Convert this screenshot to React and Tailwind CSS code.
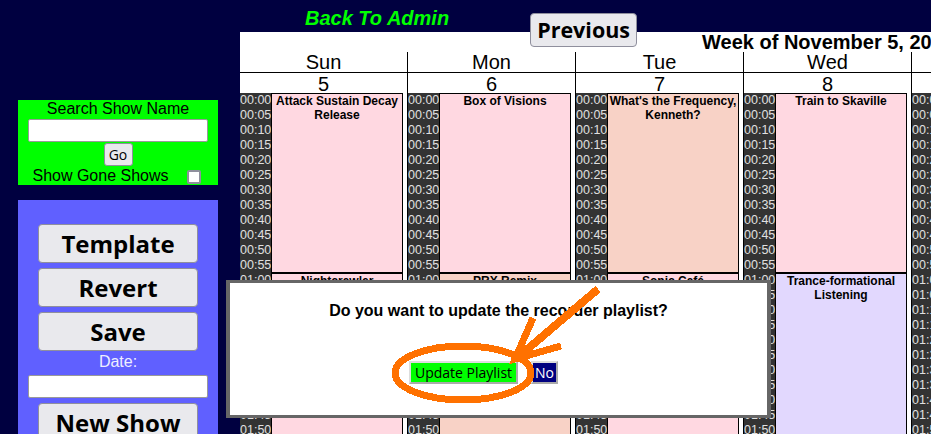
import React from 'react';

const PINK = 'bg-[#ffd8e1]';
const PEACH = 'bg-[#f8d2c6]';
const LAVENDER = 'bg-[#e2d8fe]';

const days = [
  { name: 'Sun', num: 5, shows: [{ title: 'Attack Sustain Decay Release', bg: PINK }, { title: 'Nightcrawler', bg: PINK }] },
  { name: 'Mon', num: 6, shows: [{ title: 'Box of Visions', bg: PINK }, { title: 'PRX Remix', bg: PEACH }] },
  { name: 'Tue', num: 7, shows: [{ title: "What's the Frequency, Kenneth?", bg: PEACH }, { title: 'Sonic Café', bg: PINK }] },
  { name: 'Wed', num: 8, shows: [{ title: 'Train to Skaville', bg: PINK }, { title: 'Trance-formational Listening', bg: LAVENDER }] },
  { name: 'Thu', num: 9, shows: [{ title: 'Night Shift', bg: PINK }, { title: 'Deep Cuts', bg: PEACH }] },
  { name: 'Fri', num: 10, shows: [{ title: 'Overnight Mix', bg: PINK }, { title: 'Late Set', bg: PINK }] },
  { name: 'Sat', num: 11, shows: [{ title: 'Graveyard Shift', bg: PEACH }, { title: 'Dawn Patrol', bg: PINK }] },
];

const times = Array.from({ length: 24 }, (_, i) => {
  const h = Math.floor((i * 5) / 60);
  const m = (i * 5) % 60;
  return `${String(h).padStart(2, '0')}:${String(m).padStart(2, '0')}`;
});

const DayColumn = ({ day }) => (
  <div className="w-[168px] shrink-0 border-r border-black flex flex-col">
    <div className="h-[21px] border-b border-black text-center text-[20px] leading-[20px]">{day.name}</div>
    <div className="h-[20px] text-center text-[20px] leading-[22px]">{day.num}</div>
    <div className="flex">
      <div className="w-[31px] bg-[#333333] text-[#e0e0e0] text-[12.5px] overflow-hidden">
        {times.map((t) => (
          <div key={t} className="h-[15px] leading-[15px]">{t}</div>
        ))}
      </div>
      <div className="w-[132px]">
        {day.shows.map((s) => (
          <div
            key={s.title}
            className={`h-[180px] border border-black ${s.bg} text-center font-bold text-[12px] leading-[14px] text-black`}
          >
            {s.title}
          </div>
        ))}
      </div>
    </div>
  </div>
);

const SideButton = ({ children }) => (
  <button className="w-[160px] h-[39px] shrink-0 bg-[#e9e9ed] border border-[#8f8f9d] rounded-[4px] font-['Open_Sans',sans-serif] font-bold text-[24px] leading-[24px] text-black">
    {children}
  </button>
);

const App = () => {
  return (
    <div className="w-[931px] h-[434px] overflow-hidden bg-[#000040] relative flex font-['Liberation_Sans',Arial,sans-serif] text-black">
      <aside className="w-[240px] shrink-0 pt-[100px] pl-[18px] flex flex-col">
        <div className="w-[200px] h-[85px] bg-[#00ff00] flex flex-col items-center">
          <div className="text-[16px] leading-[18px]">Search Show Name</div>
          <input className="mt-[1px] w-[180px] h-[23px] bg-white border border-[#999999] rounded-[2px]" />
          <button className="mt-[1px] h-[23px] w-[29px] bg-[#e9e9ed] border border-[#8f8f9d] rounded-[3px] font-['Open_Sans',sans-serif] text-[14px] leading-[14px]">
            Go
          </button>
          <div className="mt-[1px] flex items-center gap-[18px] mr-[3px]">
            <span className="text-[16px] leading-[18px]">Show Gone Shows</span>
            <span className="w-[14px] h-[14px] bg-white border-2 border-[#8f8f9d] rounded-[2px] mt-[2px]" />
          </div>
        </div>

        <div className="mt-[15px] w-[200px] h-[260px] bg-[#6060ff] pt-[24px] flex flex-col items-center">
          <div className="flex flex-col gap-[5px]">
            <SideButton>Template</SideButton>
            <SideButton>Revert</SideButton>
            <SideButton>Save</SideButton>
          </div>
          <div className="mt-[2px] text-[16px] leading-[18px] text-[#eeeeff]">Date:</div>
          <input className="mt-[4px] w-[180px] h-[23px] bg-white border border-[#999999] rounded-[2px]" />
          <div className="mt-[5px]">
            <SideButton>New Show</SideButton>
          </div>
        </div>
      </aside>

      <main className="flex-1 min-w-0 flex flex-col">
        <div className="h-[32px] flex items-start shrink-0">
          <a href="#" className="ml-[65px] mt-[8px] text-[20px] leading-[20px] font-bold italic text-[#00ff00]">
            Back To Admin
          </a>
          <button className="relative z-10 ml-[81px] mt-[13px] w-[107px] h-[34px] bg-[#e9e9ed] border border-[#8f8f9d] rounded-[4px] font-['Open_Sans',sans-serif] font-bold text-[21.5px] leading-[22px] text-black">
            Previous
          </button>
        </div>

        <div className="bg-white w-[1176px] shrink-0">
          <div className="h-[20px] text-center text-[20px] leading-[20px] font-bold">Week of November 5, 2023</div>
          <div className="flex">
            {days.map((d) => (
              <DayColumn key={d.name} day={d} />
            ))}
          </div>
        </div>
      </main>

      <div className="absolute left-[226px] top-[280px] w-[545px] h-[138px] bg-white border-x-4 border-y-[3px] border-[#666666] flex flex-col items-center">
        <p className="mt-[19px] text-[16px] leading-[18px] font-bold text-black">Do you want to update the recorder playlist?</p>
        <div className="mt-[41px] flex gap-[13px] pr-[30px]">
          <button className="h-[23px] px-[4px] bg-[#00ff00] border-2 border-t-[#dddddd] border-l-[#dddddd] border-r-[#aaaaaa] border-b-[#aaaaaa] font-['Open_Sans',sans-serif] text-[14px] leading-[14px] text-black">
            Update Playlist
          </button>
          <button className="h-[23px] px-[2px] bg-[#000080] border-2 border-t-[#dddddd] border-l-[#dddddd] border-r-[#aaaaaa] border-b-[#aaaaaa] font-['Open_Sans',sans-serif] text-[14px] leading-[14px] text-white">
            No
          </button>
        </div>
      </div>

      <svg className="absolute inset-0 pointer-events-none" width="931" height="434" viewBox="0 0 931 434">
        <ellipse cx="463" cy="373" rx="68" ry="27" fill="none" stroke="#ff7100" strokeWidth="7" shapeRendering="crispEdges" />
        <line x1="598" y1="289" x2="517" y2="358" stroke="#ff7100" strokeWidth="8" shapeRendering="crispEdges" />
        <polyline points="533,318 515,359 561,346" fill="none" stroke="#ff7100" strokeWidth="7" shapeRendering="crispEdges" />
      </svg>
    </div>
  );
};

export default App;
